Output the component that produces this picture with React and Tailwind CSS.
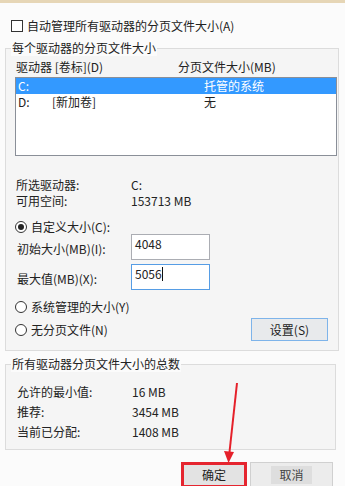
import React from "react";

const font = { fontFamily: '"Noto Sans CJK SC", "Noto Sans", sans-serif' };

function Radio({ checked }) {
  return (
    <span className="w-[12px] h-[12px] rounded-full border border-[#333] bg-white flex items-center justify-center shrink-0">
      {checked && <span className="w-[6px] h-[6px] rounded-full bg-[#222]" />}
    </span>
  );
}

function Legend({ children }) {
  return (
    <div className="-mt-[9px] ml-[5px] w-fit px-[1px] h-[16px] leading-[16px] bg-[#fbfbfb]">{children}</div>
  );
}

export default function App() {
  return (
    <div className="relative w-[345px] h-[486px] overflow-hidden bg-[#fbfbfb] text-[12px] text-[#222]" style={font}>
      <div className="h-[3px] bg-[#e6d6b6]" />

      {/* auto manage */}
      <div className="mt-[16px] ml-[11px] h-[14px] flex items-center gap-[4px]">
        <span className="w-[12px] h-[12px] border border-[#333] bg-white" />
        <span className="leading-[14px]">自动管理所有驱动器的分页文件大小(A)</span>
      </div>

      {/* per-drive group */}
      <div className="mt-[15px] ml-[5px] mr-[6px] border border-[#dcdcdc] bg-[#f5f5f5] pb-[9px]">
        <Legend>每个驱动器的分页文件大小</Legend>
        <div className="mt-[3px] h-[16px] leading-[16px] flex">
          <span className="ml-[10px] w-[162px]">驱动器 [卷标](D)</span>
          <span>分页文件大小(MB)</span>
        </div>
        <div className="mt-[2px] ml-[9px] mr-[1px] h-[79px] border border-[#8a8f98] bg-white">
          <div className="h-[16px] leading-[16px] flex bg-[#3399ff] text-white">
            <span className="pl-[2px] w-[188px]">C:</span>
            <span>托管的系统</span>
          </div>
          <div className="h-[16px] leading-[16px] flex">
            <span className="pl-[2px] w-[36px]">D:</span>
            <span className="w-[152px]">[新加卷]</span>
            <span>无</span>
          </div>
        </div>

        <div className="mt-[21px] ml-[10px] flex flex-col">
          <div className="h-[16px] leading-[16px] flex">
            <span className="w-[115px]">所选驱动器:</span>
            <span>C:</span>
          </div>
          <div className="h-[16px] leading-[16px] flex">
            <span className="w-[115px]">可用空间:</span>
            <span>153713 MB</span>
          </div>
        </div>

        <div className="mt-[10px] ml-[9px] h-[15px] flex items-center gap-[4px]">
          <Radio checked />
          <span className="leading-[15px]">自定义大小(C):</span>
        </div>

        <div className="ml-[11px] h-[26px] flex items-start">
          <span className="w-[114px] pt-[7px] leading-[16px]">初始大小(MB)(I):</span>
          <div className="w-[79px] h-[26px] border border-[#abadb3] bg-white pl-[3px] pt-[1px] leading-[16px]">4048</div>
        </div>
        <div className="mt-[4px] ml-[11px] h-[26px] flex items-start">
          <span className="w-[114px] pt-[7px] leading-[16px]">最大值(MB)(X):</span>
          <div className="w-[79px] h-[26px] border border-[#569de5] bg-white pl-[3px] pt-[1px] leading-[16px] flex items-start">
            <span>5056</span>
            <span className="w-px h-[14px] mt-[1px] bg-[#111]" />
          </div>
        </div>

        <div className="mt-[9px] ml-[9px] h-[16px] flex items-center gap-[4px]">
          <Radio />
          <span className="leading-[16px]">系统管理的大小(Y)</span>
        </div>

        <div className="mt-[3px] ml-[9px] mr-[10px] h-[23px] flex items-center justify-between">
          <div className="flex items-center gap-[4px]">
            <Radio />
            <span className="leading-[16px]">无分页文件(N)</span>
          </div>
          <div className="w-[77px] h-[23px] border border-[#7eb4ea] bg-[#e8eaec] flex items-center justify-center">设置(S)</div>
        </div>
      </div>

      {/* totals group */}
      <div className="mt-[13px] ml-[5px] mr-[9px] border border-[#dcdcdc] bg-[#f5f5f5] pb-[9px]">
        <Legend>所有驱动器分页文件大小的总数</Legend>
        <div className="mt-[12px] ml-[11px] flex flex-col gap-[4px]">
          <div className="h-[16px] leading-[16px] flex">
            <span className="w-[115px]">允许的最小值:</span>
            <span>16 MB</span>
          </div>
          <div className="h-[16px] leading-[16px] flex">
            <span className="w-[115px]">推荐:</span>
            <span>3454 MB</span>
          </div>
          <div className="h-[16px] leading-[16px] flex">
            <span className="w-[115px]">当前已分配:</span>
            <span>1408 MB</span>
          </div>
        </div>
      </div>

      {/* buttons */}
      <div className="mt-[12px] ml-[181px] flex gap-[3px]">
        <div className="w-[66px] h-[26px] border-[3px] border-[#e5252f] bg-[#e3e3e3] flex items-center justify-center">确定</div>
        <div className="w-[83px] h-[26px] border border-[#d0d0d0] bg-[#ececec] flex items-center justify-center text-[#444]">
          <span className="px-[8px] bg-[#dedede]">取消</span>
        </div>
      </div>

      {/* red annotation arrow */}
      <svg className="absolute left-0 top-0 pointer-events-none" width="345" height="486" viewBox="0 0 345 486">
        <line x1="237" y1="383" x2="229.5" y2="452" stroke="#e5202a" strokeWidth="2" />
        <polygon points="224,451 234,452 228.5,463" fill="#e5202a" />
      </svg>
    </div>
  );
}
